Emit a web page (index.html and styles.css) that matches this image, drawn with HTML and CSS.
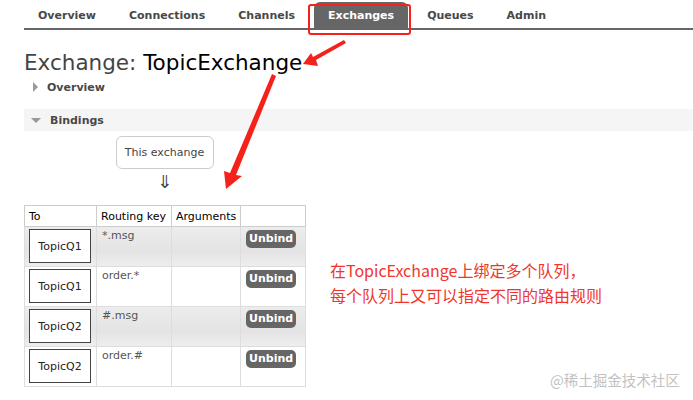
FILE: index.html
```html
<!DOCTYPE html>
<html lang="en">
<head>
  <meta charset="UTF-8" />
  <title>Exchange: TopicExchange</title>
  <link rel="stylesheet" href="styles.css">
</head>
<body>

  <ul class="tabs">
    <li>Overview</li>
    <li>Connections</li>
    <li>Channels</li>
    <li class="active">Exchanges</li>
    <li>Queues</li>
    <li>Admin</li>
  </ul>

  <div class="main">
    <h1>Exchange: <b>TopicExchange</b></h1>

    <div class="section closed"><span class="tri"></span>Overview</div>
    <div class="section open"><span class="tri"></span>Bindings</div>

    <div class="flow">
      <div class="this-ex">This exchange</div>
      <div class="down">&#8659;</div>
    </div>

    <table class="bindings">
      <colgroup><col class="c-to"><col class="c-key"><col class="c-args"><col class="c-btn"></colgroup>
      <tr><th>To</th><th>Routing key</th><th>Arguments</th><th></th></tr>
      <tr class="alt"><td><span class="queue">TopicQ1</span></td><td>*.msg</td><td></td><td><span class="unbind">Unbind</span></td></tr>
      <tr><td><span class="queue">TopicQ1</span></td><td>order.*</td><td></td><td><span class="unbind">Unbind</span></td></tr>
      <tr class="alt"><td><span class="queue">TopicQ2</span></td><td>#.msg</td><td></td><td><span class="unbind">Unbind</span></td></tr>
      <tr><td><span class="queue">TopicQ2</span></td><td>order.#</td><td></td><td><span class="unbind">Unbind</span></td></tr>
    </table>
  </div>

  <!-- annotations drawn over the screenshot -->
  <div class="mark-box"></div>
  <svg class="arrows" width="693" height="400" viewBox="0 0 693 400">
    <g fill="#f5221b">
      <polygon points="344,40 346,43 316,60 318,66 303,64 311,53 313,57"/>
      <polygon points="272,74 276,76 236,175 242,176 226,189 224,171 230,173"/>
    </g>
  </svg>

  <p class="note">在TopicExchange上绑定多个队列，<br>每个队列上又可以指定不同的路由规则</p>
  <div class="watermark">@稀土掘金技术社区</div>

</body>
</html>
```

FILE: styles.css
```css
body {
  margin: 0;
  background: #fff;
  color: #444;
  font-family: "DejaVu Sans", Verdana, sans-serif;
  font-size: 11px;
  position: relative;
  height: 400px;
  overflow: hidden;
}

.tabs {
  list-style: none;
  margin: 0 0 0 24px;
  padding: 2px 0 0 0;
  display: flex;
  border-bottom: 2px solid #666;
  height: 26px;
}

.tabs li {
  padding: 0 14px;
  margin-right: 5px;
  line-height: 28px;
  font-weight: bold;
  font-size: 11px;
  color: #484848;
}

.tabs li.active {
  background: #666;
  color: #fff;
  border-radius: 6px 6px 0 0;
}

.main {
  padding-left: 24px;
}

h1 {
  margin: 20px 0 0 0;
  font-size: 21.5px;
  font-weight: normal;
  line-height: 26px;
  color: #444;
}

h1 b {
  font-weight: normal;
  color: #000;
}

.section {
  display: flex;
  align-items: center;
  height: 22px;
  font-weight: bold;
  font-size: 11px;
  color: #484848;
  padding-left: 9px;
}

.section.closed {
  margin-top: 0;
}

.section.open {
  margin-top: 11px;
  background: #f5f5f5;
}

.tri {
  width: 0;
  height: 0;
  margin-right: 9px;
}

.closed .tri {
  border-left: 5px solid #999;
  border-top: 5px solid transparent;
  border-bottom: 5px solid transparent;
}

.open .tri {
  border-top: 5px solid #999;
  border-left: 5px solid transparent;
  border-right: 5px solid transparent;
  margin-left: -2px;
}

.flow {
  width: 281px;
  display: flex;
  flex-direction: column;
  align-items: center;
  margin-top: 5px;
}

.this-ex {
  width: 96px;
  height: 31px;
  border: 1px solid #ccc;
  border-radius: 6px;
  display: flex;
  align-items: center;
  justify-content: center;
  color: #444;
}

.down {
  font-size: 18px;
  line-height: 26px;
  color: #444;
}

.bindings {
  margin-top: 10px;
  border-collapse: collapse;
  border: 1px solid #ccc;
  table-layout: fixed;
  width: 281px;
}

.c-to { width: 72px; }
.c-key { width: 75px; }
.c-args { width: 69px; }
.c-btn { width: 65px; }

.bindings th {
  text-align: left;
  font-weight: normal;
  color: #000;
  height: 20px;
  padding: 0 4px;
  border: 1px solid #ccc;
  white-space: nowrap;
}

.bindings td {
  height: 40px;
  box-sizing: border-box;
  border: 1px solid #ddd;
  border-top-color: #ccc;
  vertical-align: top;
  padding: 2px 4px 0 5px;
  color: #555;
}

.bindings tr.alt td {
  background: linear-gradient(#ececec, #e4e4e4 60%, #eeeeee);
}

.bindings td:first-child {
  padding: 2px 4px 0 4px;
}

.queue {
  display: flex;
  align-items: center;
  justify-content: center;
  width: 60px;
  height: 32px;
  border: 1px solid #444;
  background: #fff;
  color: #222;
}

.unbind {
  display: inline-block;
  margin-top: 1px;
  background: #666;
  color: #fff;
  font-weight: bold;
  font-size: 11px;
  padding: 0 3px;
  line-height: 18px;
  border-radius: 5px;
}

.mark-box {
  position: absolute;
  left: 308px;
  top: 4px;
  width: 99px;
  height: 27px;
  border: 2px solid #f5221b;
  border-radius: 3px;
}

.arrows {
  position: absolute;
  left: 0;
  top: 0;
}

.note {
  position: absolute;
  left: 330px;
  top: 258px;
  margin: 0;
  color: #f0362c;
  font-family: "Noto Sans CJK SC", sans-serif;
  font-size: 16px;
  line-height: 25px;
}

.watermark {
  position: absolute;
  left: 550px;
  top: 369px;
  color: #c2c2c2;
  font-family: "Noto Sans CJK SC", sans-serif;
  font-size: 14.5px;
}
```
